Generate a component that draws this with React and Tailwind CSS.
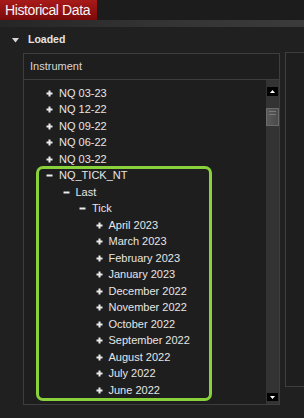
const instruments = ["NQ 03-23", "NQ 12-22", "NQ 09-22", "NQ 06-22", "NQ 03-22"];
const months = [
  "April 2023",
  "March 2023",
  "February 2023",
  "January 2023",
  "December 2022",
  "November 2022",
  "October 2022",
  "September 2022",
  "August 2022",
  "July 2022",
  "June 2022",
];

const rows = [
  ...instruments.map((label) => ({ label, level: 0, open: false })),
  { label: "NQ_TICK_NT", level: 0, open: true },
  { label: "Last", level: 1, open: true },
  { label: "Tick", level: 2, open: true },
  ...months.map((label) => ({ label, level: 3, open: false })),
];

function Toggle({ open }) {
  return (
    <svg width="7" height="7" viewBox="0 0 7 7" className="shrink-0" aria-hidden>
      <rect x="0.5" y="2.5" width="6" height="2" fill="#ececec" />
      {!open && <rect x="2.5" y="0.5" width="2" height="6" fill="#ececec" />}
    </svg>
  );
}

function Row({ label, level, open }) {
  return (
    <div
      className="flex h-[16.5px] items-center"
      style={{ paddingLeft: 22 + level * 16.5 }}
    >
      <Toggle open={open} />
      <span className="ml-[6px] text-[11px] leading-none text-[#e6e6e6]">{label}</span>
    </div>
  );
}

export default function App() {
  return (
    <div
      className="h-[418px] w-[304px] overflow-hidden bg-[#202020]"
      style={{ fontFamily: '"Liberation Sans", Arial, sans-serif' }}
    >
      {/* title tab */}
      <div className="flex h-[20px] bg-[#1c1c1c]">
        <div className="flex w-[97px] items-center bg-gradient-to-b from-[#a81a1a] to-[#7c0909] pl-[5px] text-[14px] tracking-[-0.4px] text-[#f4f4f4]">
          Historical Data
        </div>
      </div>
      <div className="h-[7px] bg-gradient-to-r from-[#262626] via-[#333333] to-[#3b3b3b]" />

      {/* Loaded section */}
      <div className="flex h-[26px] items-center pl-[12px]">
        <svg width="7" height="5" viewBox="0 0 7 5" aria-hidden>
          <path d="M0 0h7L3.5 4.5z" fill="#d8d8d8" />
        </svg>
        <span className="ml-[9px] text-[10.5px] font-bold text-[#e4e4e4]">Loaded</span>
      </div>

      <div className="flex">
        {/* instrument list */}
        <div className="ml-[23px] flex h-[352px] w-[257px] flex-col border border-[#3e3e3e] bg-[#1e1e1e]">
          <div className="flex h-[26px] items-center border-b border-[#3e3e3e] pl-[6px] text-[11px] text-[#d6d6d6]">
            Instrument
          </div>
          <div className="flex flex-1">
            <div className="relative flex-1 pt-[5px]">
              {rows.map((r) => (
                <Row key={r.label} {...r} />
              ))}
              <div className="absolute left-[12px] top-[86px] h-[235px] w-[176px] rounded-[7px] border-[3px] border-[#8ad23c]" />
            </div>
            {/* scrollbar */}
            <div className="flex w-[13px] flex-col items-center bg-[#333333] pb-[3px] pt-[7px]">
              <div className="flex h-[9px] w-[11px] items-center justify-center bg-black">
                <svg width="5" height="3" viewBox="0 0 5 3" aria-hidden>
                  <path d="M2.5 0L5 3H0z" fill="#ffffff" />
                </svg>
              </div>
              <div className="mt-[12px] flex h-[18px] w-[13px] flex-col gap-[2px] border border-[#6a6a6a] bg-gradient-to-r from-[#5a5a5a] to-[#4a4a4a] pl-[2px] pt-[2px]">
                <div className="h-px w-[7px] bg-[#7a7a7a]" />
                <div className="h-px w-[7px] bg-[#7a7a7a]" />
              </div>
              <div className="flex-1" />
              <div className="flex h-[8px] w-[11px] items-center justify-center bg-black">
                <svg width="5" height="3" viewBox="0 0 5 3" aria-hidden>
                  <path d="M0 0h5L2.5 3z" fill="#ffffff" />
                </svg>
              </div>
            </div>
          </div>
        </div>

        {/* right pane */}
        <div className="ml-[5px] mt-[-1px] h-[335px] flex-1 border border-r-0 border-[#3e3e3e] bg-[#1e1e1e]" />
      </div>
    </div>
  );
}
